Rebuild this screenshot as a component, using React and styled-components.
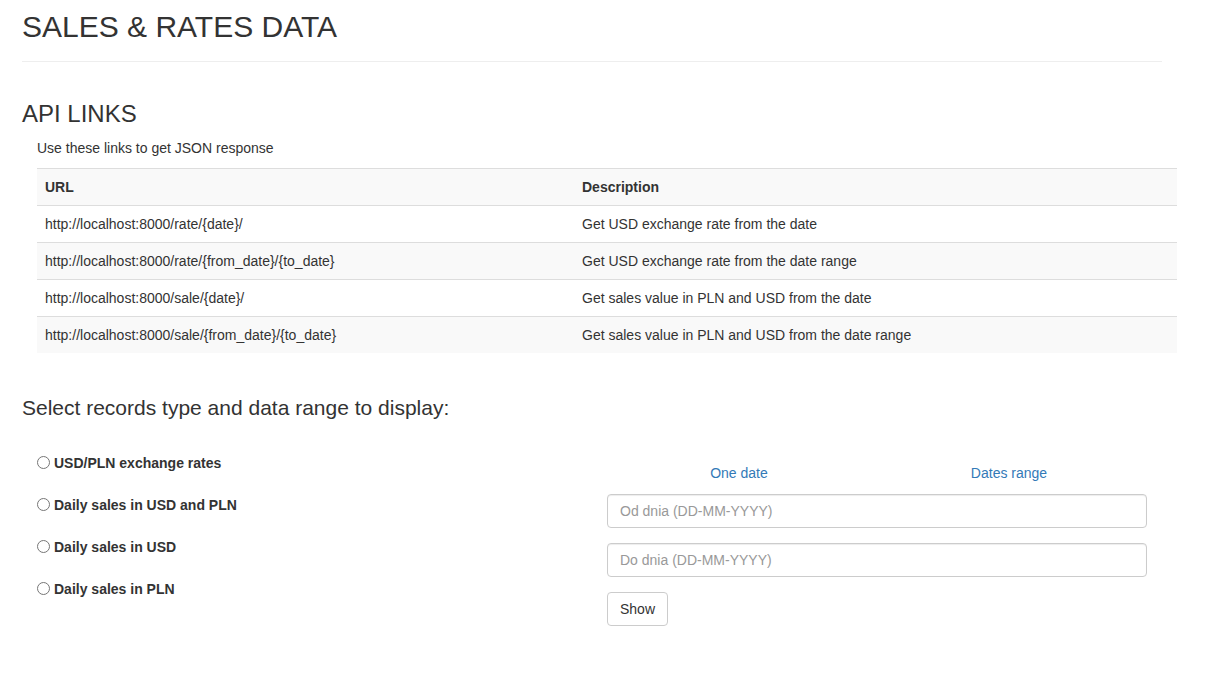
import React from "react";
import styled, { createGlobalStyle } from "styled-components";

const Global = createGlobalStyle`
  html, body { margin: 0; padding: 0; background: #fff; }
  body {
    font-family: "Liberation Sans", Arial, Helvetica, sans-serif;
    font-size: 14px;
    line-height: 20px;
    color: #333;
  }
  * { box-sizing: border-box; }
`;

const Page = styled.div`
  padding-left: 22px;
  width: 1217px;
`;

const Title = styled.h1`
  margin: 10px 0 0;
  font-size: 30px;
  line-height: 1.1;
  font-weight: 400;
  color: #333;
`;

const Rule = styled.hr`
  margin: 18px 0 0;
  width: 1140px;
  border: 0;
  border-top: 1px solid #eee;
  height: 0;
`;

const SectionTitle = styled.h3`
  margin: ${(p) => p.$top}px 0 0;
  font-size: ${(p) => p.$size}px;
  line-height: 1.1;
  font-weight: 400;
  color: #333;
`;

const Lead = styled.p`
  margin: 11px 0 0 15px;
`;

const Table = styled.table`
  margin: 10px 0 0 15px;
  width: 1140px;
  border-collapse: collapse;
  border-spacing: 0;
`;

const Row = styled.tr`
  background: ${(p) => (p.$striped ? "#f9f9f9" : "#fff")};
`;

const Cell = styled.td`
  padding: 8px;
  line-height: 20px;
  border-top: 1px solid #ddd;
  text-align: left;
  vertical-align: top;
  font-weight: ${(p) => (p.$head ? 700 : 400)};
  width: ${(p) => p.$w || "auto"};
`;

const Columns = styled.div`
  display: flex;
  margin-top: 34px;
  width: 1140px;
`;

const Col = styled.div`
  width: 570px;
  padding: ${(p) => p.$pt || 0}px 15px 0;
  display: flex;
  flex-direction: column;
`;

const RadioLabel = styled.label`
  display: flex;
  align-items: center;
  font-weight: 700;
  height: 20px;
  margin-bottom: 22px;
  cursor: pointer;
`;

const RadioCircle = styled.span`
  width: 13px;
  height: 13px;
  border-radius: 50%;
  border: 1px solid #767676;
  background: #fff;
  margin-right: 4px;
  margin-top: -1px;
  flex: none;
`;

const Nav = styled.div`
  display: flex;
  width: 540px;
  margin-left: -3px;
`;

const NavLink = styled.a`
  flex: 1;
  text-align: center;
  color: #337ab7;
  text-decoration: none;
  line-height: 20px;
`;

const Input = styled.input`
  display: block;
  width: 540px;
  height: 34px;
  padding: 6px 12px;
  font-family: inherit;
  font-size: 14px;
  line-height: 20px;
  color: #555;
  border: 1px solid #ccc;
  border-radius: 4px;
  box-shadow: inset 0 1px 1px rgba(0, 0, 0, 0.075);
  margin-top: ${(p) => p.$top}px;
  outline: none;
  &::placeholder { color: #999; }
`;

const Button = styled.button`
  align-self: flex-start;
  margin-top: 15px;
  height: 34px;
  padding: 6px 12px;
  font-family: inherit;
  font-size: 14px;
  line-height: 20px;
  color: #333;
  background: #fff;
  border: 1px solid #ccc;
  border-radius: 4px;
`;

const links = [
  ["http://localhost:8000/rate/{date}/", "Get USD exchange rate from the date"],
  ["http://localhost:8000/rate/{from_date}/{to_date}", "Get USD exchange rate from the date range"],
  ["http://localhost:8000/sale/{date}/", "Get sales value in PLN and USD from the date"],
  ["http://localhost:8000/sale/{from_date}/{to_date}", "Get sales value in PLN and USD from the date range"],
];

const options = [
  "USD/PLN exchange rates",
  "Daily sales in USD and PLN",
  "Daily sales in USD",
  "Daily sales in PLN",
];

export default function App() {
  return (
    <Page>
      <Global />
      <Title>SALES &amp; RATES DATA</Title>
      <Rule />
      <SectionTitle $top={39} $size={24}>API LINKS</SectionTitle>
      <Lead>Use these links to get JSON response</Lead>
      <Table>
        <tbody>
          <Row $striped>
            <Cell $head $w="537px">URL</Cell>
            <Cell $head>Description</Cell>
          </Row>
          {links.map(([url, desc], i) => (
            <Row key={url} $striped={i % 2 === 1}>
              <Cell>{url}</Cell>
              <Cell>{desc}</Cell>
            </Row>
          ))}
        </tbody>
      </Table>
      <SectionTitle $top={43} $size={21}>Select records type and data range to display:</SectionTitle>
      <Columns>
        <Col>
          {options.map((o) => (
            <RadioLabel key={o}>
              <RadioCircle />
              {o}
            </RadioLabel>
          ))}
        </Col>
        <Col $pt={10}>
          <Nav>
            <NavLink href="#">One date</NavLink>
            <NavLink href="#">Dates range</NavLink>
          </Nav>
          <Input $top={11} placeholder="Od dnia (DD-MM-YYYY)" />
          <Input $top={15} placeholder="Do dnia (DD-MM-YYYY)" />
          <Button>Show</Button>
        </Col>
      </Columns>
    </Page>
  );
}
